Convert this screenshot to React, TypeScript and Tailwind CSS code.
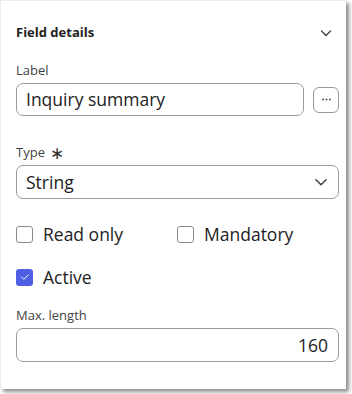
import React from 'react';

function Chevron({ className }: { className?: string }) {
  return (
    <svg viewBox="0 0 16 16" className={className} fill="none" stroke="currentColor" strokeWidth={1.4}>
      <path d="M3.5 6l4.5 4.5L12.5 6" strokeLinecap="round" strokeLinejoin="round" />
    </svg>
  );
}

function Checkbox({ checked, label }: { checked?: boolean; label: string }) {
  return (
    <label className="flex h-[26px] items-center gap-[10px]">
      {checked ? (
        <span className="flex h-[17px] w-[17px] items-center justify-center rounded-[3px] bg-[#4f5fe3]">
          <svg viewBox="0 0 16 16" className="h-3 w-3" fill="none" stroke="white" strokeWidth={1.3}>
            <path d="M3.5 8.2l3 3L12.5 5" strokeLinecap="round" strokeLinejoin="round" />
          </svg>
        </span>
      ) : (
        <span className="h-[17px] w-[17px] rounded-[3px] border border-[#8a8a8a] bg-white" />
      )}
      <span className="text-[17.5px] text-[#222]">{label}</span>
    </label>
  );
}

export default function App() {
  return (
    <div className="h-[394px] w-[352px] bg-white" style={{ fontFamily: '"Open Sans", "Noto Sans", sans-serif' }}>
      <div className="h-[389px] w-[346px] border-l border-t border-[#ececec] bg-white pl-[15px] pr-[7px] pt-[22px] shadow-[3px_3px_4px_rgba(0,0,0,0.45)]">
        <div className="flex h-[19px] items-center justify-between">
          <h3 className="text-[13px] font-bold text-[#222]">Field details</h3>
          <Chevron className="mr-[5px] h-4 w-4 text-[#444]" />
        </div>

        <div className="mt-[19px] h-[19px] text-[13px] leading-[19px] text-[#444]">Label</div>
        <div className="mt-[3px] flex items-center gap-[9px]">
          <div className="flex h-[33px] flex-1 items-center rounded-[7px] border border-[#9a9a9a] px-[9px] text-[17.5px] text-[#222]">
            Inquiry summary
          </div>
          <button className="flex h-[26px] w-[26px] items-center justify-center rounded-[6px] border border-[#9a9a9a] text-[#444]">
            <svg viewBox="0 0 12 4" className="h-[3px] w-[9px]" fill="currentColor">
              <circle cx="1.5" cy="2" r="1.2" />
              <circle cx="6" cy="2" r="1.2" />
              <circle cx="10.5" cy="2" r="1.2" />
            </svg>
          </button>
        </div>

        <div className="mt-[27px] flex h-[19px] items-center gap-[5px] text-[13px] leading-[19px] text-[#444]">
          Type <span className="text-[17px] leading-none text-[#333]">∗</span>
        </div>
        <div className="mt-[3px] flex h-[34px] items-center justify-between rounded-[7px] border border-[#9a9a9a] pl-[9px] pr-[8px] text-[17.5px] text-[#222]">
          String
          <Chevron className="h-[18px] w-[18px] text-[#444]" />
        </div>

        <div className="mt-[22px] flex items-center">
          <div className="w-[161px]">
            <Checkbox label="Read only" />
          </div>
          <Checkbox label="Mandatory" />
        </div>
        <div className="mt-[17px]">
          <Checkbox checked label="Active" />
        </div>

        <div className="mt-[16px] h-[19px] text-[13px] leading-[19px] text-[#444]">Max. length</div>
        <div className="mt-[3px] flex h-[34px] items-center justify-end rounded-[7px] border border-[#9a9a9a] px-[10px] text-[17.5px] text-[#222]">
          160
        </div>
      </div>
    </div>
  );
}
